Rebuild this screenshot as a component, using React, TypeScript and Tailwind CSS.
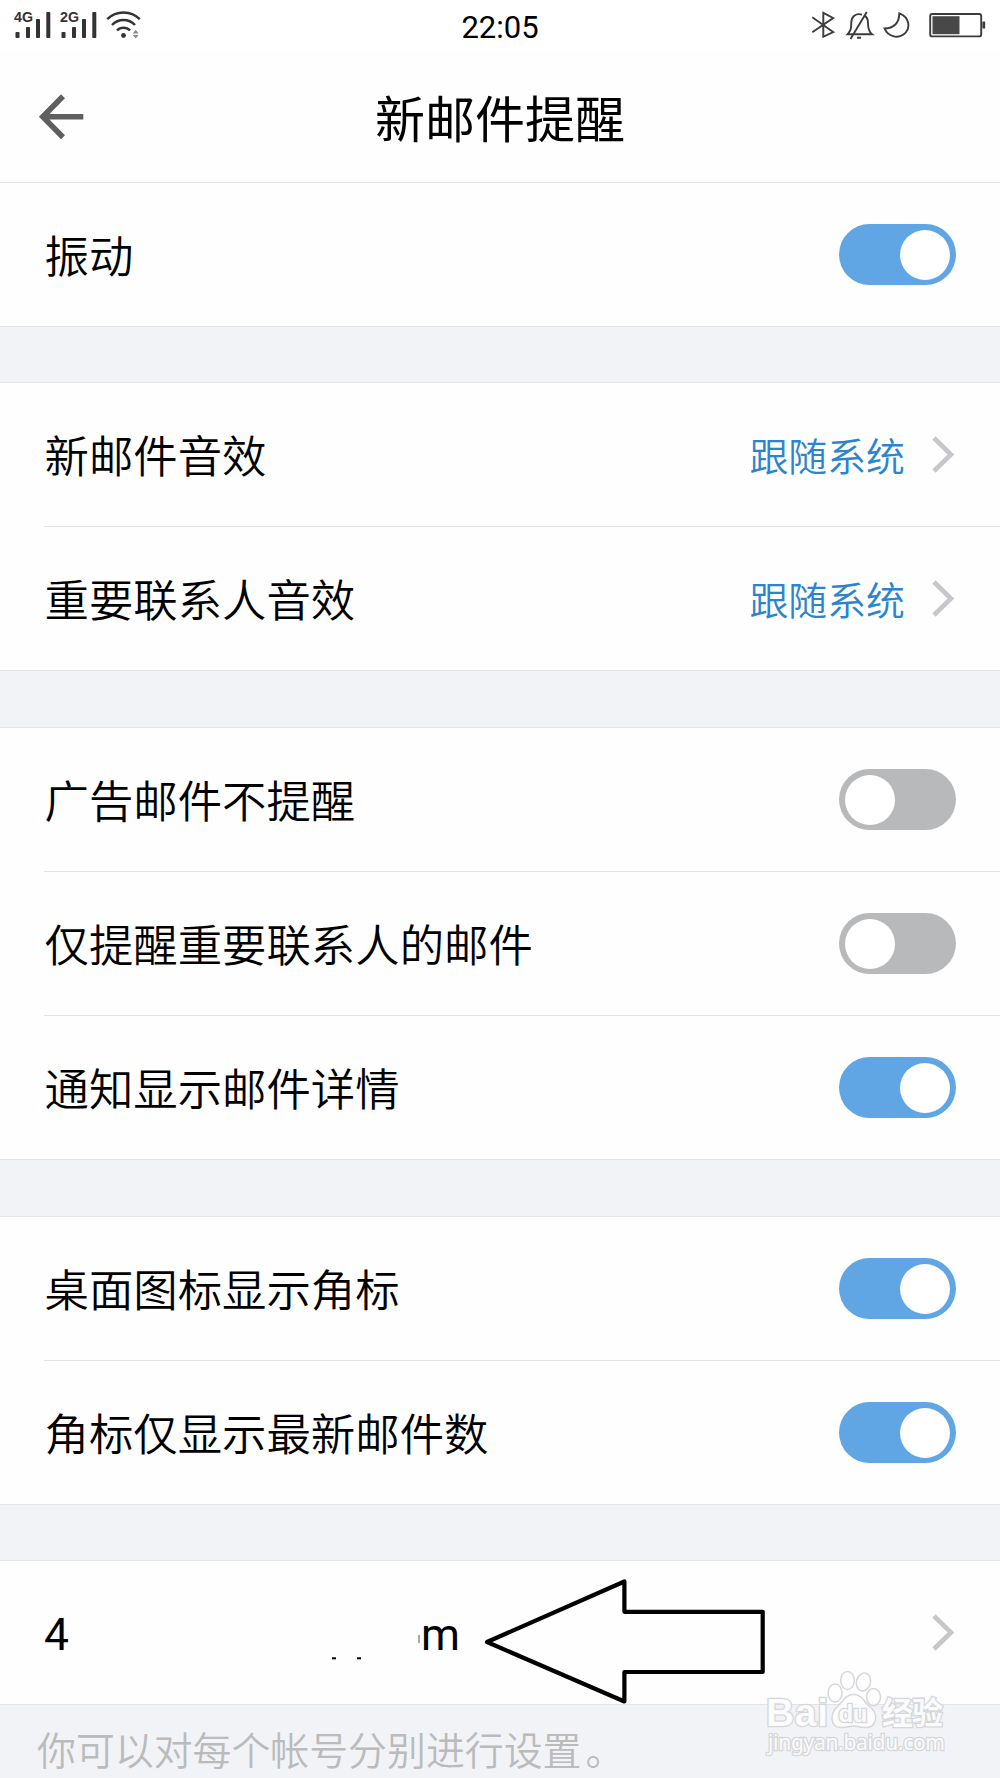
import clsx from "clsx"

function Signal({ label }: { label: string }) {
  return (
    <svg className="-mt-[4px]" width="38" height="32" viewBox="0 -4 38 32" fill="#333">
      <text
        x="0"
        y="10.6"
        fontSize="14"
        fontWeight="700"
        textLength="19"
        lengthAdjust="spacingAndGlyphs"
        fontFamily="Liberation Sans, sans-serif"
      >
        {label}
      </text>
      <rect x="1.5" y="21" width="4" height="6" rx="0.8" />
      <rect x="12" y="16" width="4" height="11" rx="0.8" />
      <rect x="22" y="8" width="4" height="19" rx="0.8" />
      <rect x="32.3" y="1" width="4" height="26" rx="0.8" />
    </svg>
  )
}

function Wifi() {
  return (
    <svg width="36" height="28" viewBox="0 0 36 28" fill="none" stroke="#333" strokeWidth="2.5">
      <path d="M1.2 8.2C10.5 -0.8 24.5 -0.8 33.8 8.2" />
      <path d="M6 14C12.5 7.3 22.5 7.3 29 14" />
      <path d="M11 19.5C14.5 15.8 20.5 15.8 24 19.5" />
      <circle cx="17.5" cy="24.5" r="2.4" fill="#333" stroke="none" />
      <path d="M26.8 22.5L29.7 18.8L32.6 22.5ZM26.8 24.1L29.7 27.5L32.6 24.1Z" fill="#888" stroke="none" />
    </svg>
  )
}

function StatusBar() {
  return (
    <div className="relative flex h-[50px] items-center justify-between bg-white pl-[14px] pr-[14px]">
      <div className="flex h-[28px] gap-[8px]">
        <Signal label="4G" />
        <Signal label="2G" />
        <Wifi />
      </div>
      <div className="absolute inset-x-0 top-[10px] text-center font-[Roboto,sans-serif] text-[31px] font-normal leading-[36px] text-black">
        22:05
      </div>
      <svg width="176" height="30" viewBox="810 10 176 30" fill="none" stroke="#3c3c3c" strokeWidth="1.9">
        <path d="M812.3 17.3L833.2 32L823.3 36.8V12.8L833.2 18L812.3 32.2" />
        {/* muted bell */}
        <path d="M862 14.6C855.5 12.8 851.3 17 851.3 22.5C851.3 29 850.5 31 847.5 34.3H872C868.5 31.5 868 28.5 868 23C868 19.5 866.8 17 864.8 15.6M866.8 12L850.5 39M857 37.7H861" />
        <path d="M899.3 13.3C899.5 23 893.5 28.4 884.5 28.4C888 36.5 897.5 39 903.5 34.5C911.5 28.5 909.5 17 899.3 13.3Z" />
        {/* battery */}
        <rect x="930.2" y="14" width="51" height="22.4" rx="2" />
        <rect x="932.5" y="16.2" width="27" height="18" fill="#484848" stroke="none" />
        <rect x="982.4" y="21.5" width="2.8" height="7" rx="0.6" fill="#3c3c3c" stroke="none" />
      </svg>
    </div>
  )
}

function Toggle({ on }: { on: boolean }) {
  return (
    <div
      className={clsx(
        "flex h-[61px] w-[117px] items-center rounded-full",
        on ? "justify-end bg-[#60a6e5] pr-[6px]" : "justify-start bg-[#b8b9bb] pl-[5.5px]"
      )}
    >
      <div className="size-[50px] rounded-full bg-white" />
    </div>
  )
}

function Chevron() {
  return (
    <svg width="24" height="38" viewBox="0 0 24 38" fill="none" stroke="#c7c7cb" strokeWidth="4.6">
      <path d="M2 2L19 18.5L2 35" />
    </svg>
  )
}

type Item = { label: string; on?: boolean; value?: string }

function Row({ item, last }: { item: Item; last: boolean }) {
  return (
    <div className={clsx("h-[144px]", last ? "border-b border-[#e2e3e5]" : "pl-[44px]")}>
      <div
        className={clsx(
          "flex h-full items-center justify-between pr-[44px]",
          last ? "pl-[44px]" : "border-b border-[#e3e3e4]"
        )}
      >
        <span className="pb-[2px] pl-[0.5px] text-[44.4px] leading-[60px] text-black">{item.label}</span>
        {item.value ? (
          <div className="flex items-center gap-[27px]">
            <span className="pb-[2px] text-[38.9px] leading-[56px] text-[#2b84d0]">{item.value}</span>
            <Chevron />
          </div>
        ) : (
          <Toggle on={!!item.on} />
        )}
      </div>
    </div>
  )
}

function Group({ items }: { items: Item[] }) {
  return (
    <section className="bg-[#fefefe]">
      {items.map((item, i) => (
        <Row key={item.label} item={item} last={i === items.length - 1} />
      ))}
    </section>
  )
}

function AccountRow() {
  return (
    <div className="relative flex h-[144px] items-center justify-between border-b border-[#e2e3e5] bg-[#fefefe] pl-[44px] pr-[44px]">
      <div className="flex items-center font-[Roboto,sans-serif] text-[44.4px] font-normal leading-[60px] text-black">
        <span className="pt-[5px]">4</span>
        {/* what is left of the hidden address */}
        <svg width="351" height="60" viewBox="69 1603 351 60">
          <rect x="332" y="1657.3" width="4" height="2" />
          <rect x="357" y="1657.3" width="4" height="2" />
          <rect x="418" y="1635" width="2" height="8" fill="#aaa" />
        </svg>
        <span className="pl-px pt-[5px]">m</span>
      </div>
      <Chevron />
      <svg className="absolute left-[480px] top-[13px]" width="290" height="136" viewBox="480 1574 290 136">
        <path
          d="M487 1642L624.4 1581.5V1611.8H762.7V1672H624.4V1701.5Z"
          fill="none"
          stroke="#000"
          strokeWidth="4.2"
          strokeLinejoin="round"
        />
      </svg>
    </div>
  )
}

function Watermark() {
  return (
    <svg
      className="absolute right-[50px] top-[1665px]"
      width="190"
      height="100"
      viewBox="760 1665 190 100"
      fill="#fff"
      fillOpacity="0.75"
      stroke="#d6d7da"
      strokeWidth="1.5"
    >
      <ellipse cx="835" cy="1693" rx="7" ry="9" />
      <ellipse cx="847.5" cy="1680.5" rx="6.8" ry="9" />
      <ellipse cx="863.5" cy="1682" rx="7" ry="9" transform="rotate(15 863.5 1682)" />
      <ellipse cx="873.5" cy="1697" rx="7" ry="8.5" />
      <path d="M853.5 1694.5C862 1694.5 864 1702 870 1707C878 1713 878 1727 866 1727.5C860 1727.8 858 1726 853.5 1726C849 1726 847 1727.8 841 1727.5C829 1727 830 1713 838 1706C843 1701 846 1694.5 853.5 1694.5Z" />
      <g fontFamily="Liberation Sans, sans-serif" fontWeight="700" fillOpacity="0.9" paintOrder="stroke" strokeWidth="2.6">
        <text x="766" y="1725.5" fontSize="39" textLength="62">Bai</text>
        <text x="838.5" y="1722" fontSize="24" textLength="29">du</text>
        <text x="882" y="1724" fontSize="31" textLength="61" fontFamily="Noto Sans CJK SC, sans-serif">经验</text>
        <text x="768" y="1750" fontSize="21" textLength="177" fontFamily="Noto Sans, sans-serif" fontWeight="400">
          jingyan.baidu.com
        </text>
      </g>
    </svg>
  )
}

export default function App() {
  return (
    <main className="relative flex h-[1778px] w-[1000px] flex-col overflow-hidden bg-[#f2f3f7] font-['Noto_Sans_CJK_SC',sans-serif] font-[350]">
      <StatusBar />
      <header className="relative flex h-[133px] items-center justify-center border-b border-[#e6e6e7] bg-[#fefefe]">
        <svg className="absolute left-[38px] top-[42px]" width="48" height="50" viewBox="38 92 48 50" fill="none" stroke="#5f5f5f" strokeWidth="5.6">
          <path d="M63 96.2L42.8 116.7L63 137.2M42.8 116.7H83.3" />
        </svg>
        <h1 className="text-[50px] font-normal leading-[60px] text-black">新邮件提醒</h1>
      </header>

      <Group items={[{ label: "振动", on: true }]} />
      <div className="h-[56px] border-b border-[#e4e5e7]" />
      <Group
        items={[
          { label: "新邮件音效", value: "跟随系统" },
          { label: "重要联系人音效", value: "跟随系统" },
        ]}
      />
      <div className="h-[57px] border-b border-[#e4e5e7]" />
      <Group
        items={[
          { label: "广告邮件不提醒", on: false },
          { label: "仅提醒重要联系人的邮件", on: false },
          { label: "通知显示邮件详情", on: true },
        ]}
      />
      <div className="h-[57px] border-b border-[#e4e5e7]" />
      <Group
        items={[
          { label: "桌面图标显示角标", on: true },
          { label: "角标仅显示最新邮件数", on: true },
        ]}
      />
      <div className="h-[56px] border-b border-[#e4e5e7]" />
      <AccountRow />
      <p className="pl-[37px] pt-[15px] text-[38.9px] leading-[56px] text-[#bbbbbc]">
        你可以对每个帐号分别进行设置<span className="pl-[4px]">。</span>
      </p>
      <Watermark />
    </main>
  )
}
